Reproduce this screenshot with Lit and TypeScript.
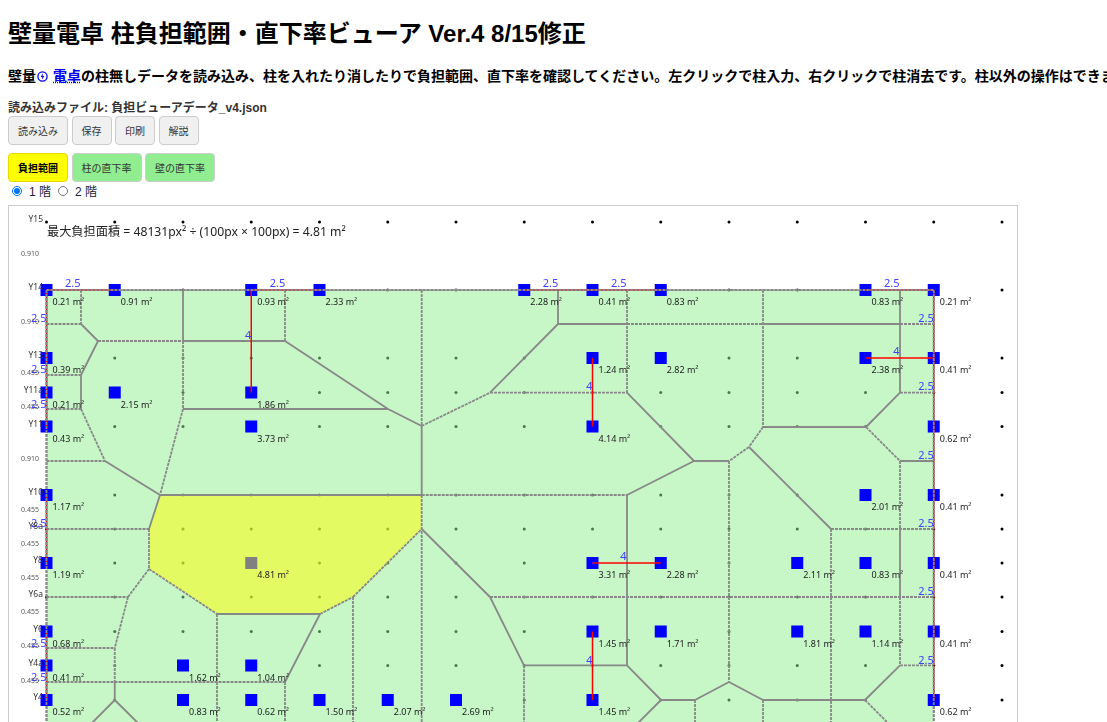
import { LitElement, html, css, svg } from 'lit'
import { customElement, state } from 'lit/decorators.js'

const COLS = [46.5, 114.75, 183, 251.25, 319.5, 387.75, 456, 524.25, 592.5, 660.75, 729, 797.25, 865.5, 933.75, 1002]
const ROWS = [222, 290, 358, 392.5, 426.5, 495, 529, 563, 597, 631.5, 665.5, 700]
const [L, R] = [46.5, 933.75]
const BOTTOM = 730

// [x1, y1, x2, y2]
const SOLID = [
  [81, 324, 98, 341], [183, 341, 285, 341], [183, 290, 183, 341], [98, 341, 81, 375], [81, 375, 81, 409],
  [105, 461, 160, 495], [183, 409, 388, 409], [285, 341, 388, 409], [388, 409, 421.7, 426], [421.7, 426, 421.7, 495],
  [490, 392.7, 558, 324], [558, 290, 558, 324], [558, 324, 627, 324], [763, 324, 900, 324], [627, 392.7, 694, 461],
  [694, 461, 729, 461], [694, 461, 627, 495], [627, 495, 627, 665.3], [160, 495, 421.7, 495], [763, 427, 866, 427],
  [900, 290, 900, 392.7], [900, 392.7, 866, 427], [900, 461, 933.75, 461], [900, 529, 900, 597], [900, 665.3, 865, 700],
  [763, 700, 865, 700], [763, 700, 729, 682], [749, 447, 831, 529], [490, 597, 524, 665.3], [421.7, 529, 490, 597],
  [524, 665.3, 627, 665.3], [627, 665.3, 661, 700], [661, 700, 695, 700], [695, 700, 729, 682], [661, 700, 631, 730],
  [149, 529, 160, 495], [114.75, 682, 114.75, 700], [217, 614, 320, 614], [320, 614, 285, 682],
  [114.75, 700, 85, 730], [114.75, 700, 145, 730],
]
const DASHED = [
  [L, 290, R, 290], [L, 290, L, BOTTOM], [R, 290, R, BOTTOM], [81, 290, 81, 324], [L, 324, 81, 324], [98, 341, 183, 341],
  [285, 290, 285, 341], [183, 341, 183, 409], [L, 375, 81, 375], [L, 409, 81, 409], [81, 409, 105, 461], [L, 461, 105, 461],
  [183, 409, 160, 495], [421.7, 290, 421.7, 426], [421.7, 495, 421.7, BOTTOM], [421.7, 426, 490, 392.7], [627, 324, 763, 324],
  [900, 324, R, 324], [627, 290, 627, 392.7], [490, 392.7, 627, 392.7], [729, 461, 729, 682], [421.7, 495, 627, 495],
  [763, 290, 763, 427], [900, 392.7, R, 392.7], [866, 427, 900, 461], [900, 461, 900, 529], [900, 597, 900, 665.3],
  [900, 665.3, R, 665.3], [865, 700, 895, 730], [763, 700, 763, BOTTOM], [763, 427, 749, 447], [749, 447, 729, 461],
  [831, 529, R, 529], [831, 529, 831, BOTTOM], [490, 597, R, 597], [524, 665.3, 524, BOTTOM], [695, 700, 695, BOTTOM],
  [L, 529, 149, 529], [149, 529, 149, 569], [149, 569, 128, 597], [L, 597, 128, 597], [128, 597, 114.75, 648],
  [L, 648, 114.75, 648], [114.75, 648, 114.75, 682], [L, 682, 285, 682], [149, 569, 217, 614], [217, 614, 217, BOTTOM],
  [285, 682, 285, BOTTOM], [320, 614, 353, 597], [353, 597, 421.7, 529], [353, 597, 353, BOTTOM],
]

// row y, then [column index, area]
const PILLARS: [number, [number, string][]][] = [
  [290, [[0, '0.21'], [1, '0.91'], [3, '0.93'], [4, '2.33'], [7, '2.28'], [8, '0.41'], [9, '0.83'], [12, '0.83'], [13, '0.21']]],
  [358, [[0, '0.39'], [8, '1.24'], [9, '2.82'], [12, '2.38'], [13, '0.41']]],
  [392.5, [[0, '0.21'], [1, '2.15'], [3, '1.86']]],
  [426.5, [[0, '0.43'], [3, '3.73'], [8, '4.14'], [13, '0.62']]],
  [495, [[0, '1.17'], [12, '2.01'], [13, '0.41']]],
  [563, [[0, '1.19'], [3, '4.81'], [8, '3.31'], [9, '2.28'], [11, '2.11'], [12, '0.83'], [13, '0.41']]],
  [631.5, [[0, '0.68'], [8, '1.45'], [9, '1.71'], [11, '1.81'], [12, '1.14'], [13, '0.41']]],
  [665.5, [[0, '0.41'], [2, '1.62'], [3, '1.04']]],
  [700, [[0, '0.52'], [2, '0.83'], [3, '0.62'], [4, '1.50'], [5, '2.07'], [6, '2.69'], [8, '1.45'], [13, '0.62']]],
]

// beams: [x1, y1, x2, y2, span]
const BEAMS: [number, number, number, number, string][] = [
  [L, 290, 114.75, 290, '2.5'], [251.25, 290, 319.5, 290, '2.5'], [524.25, 290, 592.5, 290, '2.5'],
  [592.5, 290, 660.75, 290, '2.5'], [865.5, 290, R, 290, '2.5'],
  [L, 290, L, 358, '2.5'], [L, 358, L, 392.5, '2.5'], [L, 392.5, L, 426.5, '2.5'], [L, 495, L, 563, '2.5'],
  [L, 631.5, L, 665.5, '2.5'], [L, 665.5, L, 700, '2.5'],
  [R, 290, R, 358, '2.5'], [R, 358, R, 426.5, '2.5'], [R, 426.5, R, 495, '2.5'], [R, 495, R, 563, '2.5'],
  [R, 563, R, 631.5, '2.5'], [R, 631.5, R, 700, '2.5'],
  [251.25, 290, 251.25, 392.5, '4'], [592.5, 358, 592.5, 426.5, '4'], [865.5, 358, R, 358, '4'],
  [592.5, 563, 660.75, 563, '4'], [592.5, 631.5, 592.5, 700, '4'],
]

const ROW_LABELS: [string, number][] = [
  ['Y15', 222], ['Y14', 290], ['Y13', 358], ['Y11a', 392.5], ['Y11', 426.5], ['Y10', 495], ['Y8a', 529],
  ['Y8', 563], ['Y6a', 597], ['Y6', 631.5], ['Y4a', 665.5], ['Y4', 700],
]
const GAP_LABELS: [string, number][] = [
  ['0.910', 256], ['0.910', 324], ['0.455', 375], ['0.455', 409], ['0.910', 461], ['0.455', 512], ['0.455', 546],
  ['0.455', 580], ['0.455', 614], ['0.455', 648], ['0.455', 683],
]
const YELLOW = '160,495 421.7,495 421.7,529 353,597 320,614 217,614 149,569 149,529'

@customElement('app-root')
export class AppRoot extends LitElement {
  static styles = css`
    :host {
      display: block;
      padding: 0 8px;
      font-family: 'Liberation Sans', 'Noto Sans CJK JP', sans-serif;
      color: #000;
    }
    h1 {
      margin: 0;
      padding-top: 18px;
      font-size: 24px;
      line-height: 32px;
      white-space: nowrap;
    }
    .intro {
      margin: 17px 0 0;
      font-size: 14px;
      line-height: 18px;
      font-weight: bold;
      white-space: nowrap;
    }
    .intro svg {
      width: 11px;
      height: 11px;
      vertical-align: -1px;
      margin: 0 5px 0 1px;
    }
    .intro a {
      color: #00e;
      text-decoration: underline dotted;
    }
    .file {
      margin-top: 16px;
      font-size: 12px;
      line-height: 15px;
      font-weight: bold;
      color: #333;
    }
    .row {
      display: flex;
      gap: 3.5px;
    }
    .row + .row {
      margin-top: 8px;
    }
    button {
      box-sizing: border-box;
      height: 29px;
      padding: 0 9px;
      border: 1px solid #ccc;
      border-radius: 4px;
      background: #f0f0f0;
      color: #333;
      font: 10px 'Liberation Sans', 'Noto Sans CJK JP', sans-serif;
    }
    button.on {
      background: #ff0;
      border-color: #e6d800;
      color: #000;
      font-weight: bold;
    }
    button.off {
      background: #90ee90;
    }
    .floors {
      display: flex;
      align-items: center;
      height: 17px;
      padding-left: 4px;
      font-size: 12px;
      color: #223;
    }
    .floors input {
      width: 10px;
      height: 10px;
      margin: 0 7px 0 0;
    }
    .floors label {
      display: flex;
      align-items: center;
      margin-right: 7px;
    }
    .sheet {
      width: 1008px;
      height: 520px;
      margin-top: 6px;
      border: 1px solid #ccc;
      overflow: hidden;
    }
    .sheet svg {
      display: block;
      font-family: 'Noto Sans', 'Noto Sans CJK JP', sans-serif;
      filter: blur(0.3px);
    }
    .wall {
      stroke: #888;
      stroke-width: 1.8;
      fill: none;
    }
    .wall.dash {
      stroke-dasharray: 3 1;
    }
    .beam {
      stroke: #f00;
      stroke-width: 1.5;
    }
    .area {
      font-size: 9px;
      fill: #222;
    }
    .span {
      font-size: 11px;
      fill: #4040ff;
      text-anchor: end;
    }
    .axis {
      font-size: 8.5px;
      fill: #333;
      text-anchor: end;
    }
    .gap {
      font-size: 7px;
      fill: #555;
      text-anchor: end;
    }
    .headline {
      font-size: 12.2px;
      fill: #222;
    }
  `

  @state()
  floor = 1

  line(seg: number[], cls: string) {
    return svg`<line class=${cls} x1=${seg[0]} y1=${seg[1]} x2=${seg[2]} y2=${seg[3]} />`
  }

  drawing() {
    return svg`
      ${ROWS.flatMap((y) => COLS.map((x) => svg`<circle cx=${x} cy=${y} r="1.5" fill="#000" />`))}
      <rect x=${L} y="290" width=${R - L} height=${BOTTOM - 290} fill="#90ee90" fill-opacity="0.5" />
      <polygon points=${YELLOW} fill="#ff0" fill-opacity="0.5" />
      ${SOLID.map((s) => this.line(s, 'wall'))}
      ${DASHED.map((s) => this.line(s, 'wall dash'))}
      ${PILLARS.flatMap(([y, items]) =>
        items.map(([col, area]) => {
          const x = COLS[col]
          return svg`
            <rect x=${x - 6} y=${y - 6} width="12" height="12" fill=${area === '4.81' ? '#808080' : '#00f'} />
          `
        })
      )}
      ${BEAMS.map((b) => this.line(b as unknown as number[], 'beam'))}
      ${DASHED.slice(0, 3).map((s) => this.line(s, 'wall dash'))}
      ${PILLARS.flatMap(([y, items]) =>
        items.map(([col, area]) => svg`<text class="area" x=${COLS[col] + 6} y=${y + 15}>${area} m²</text>`)
      )}
      ${BEAMS.map((b) => {
        const vertical = b[0] === b[2]
        const x = (b[0] + b[2]) / 2
        const y = (b[1] + b[3]) / 2
        return svg`<text class="span" x=${x} y=${vertical ? y - 2 : y - 3}>${b[4]}</text>`
      })}
      ${ROW_LABELS.map(([t, y]) => svg`<text class="axis" x="43" y=${y}>${t}</text>`)}
      ${GAP_LABELS.map(([t, y]) => svg`<text class="gap" x="39" y=${y}>${t}</text>`)}
      <text class="headline" x="47" y="235.5">最大負担面積 = 48131px² ÷ (100px × 100px) = 4.81 m²</text>
    `
  }

  render() {
    return html`
      <h1>壁量電卓 柱負担範囲・直下率ビューア Ver.4 8/15修正</h1>
      <p class="intro">
        壁量<svg viewBox="0 0 12 12"><circle cx="6" cy="6" r="5" fill="none" stroke="#00e" stroke-width="1.4" /><path d="M6.6 2.4 4 6.6h1.8L5.4 9.6 8 5.4H6.2z" fill="#00e" /></svg><a href="#">電卓</a>の柱無しデータを読み込み、柱を入れたり消したりで負担範囲、直下率を確認してください。左クリックで柱入力、右クリックで柱消去です。柱以外の操作はできません。
      </p>
      <div class="file">読み込みファイル: 負担ビューアデータ_v4.json</div>
      <div class="row">
        <button>読み込み</button><button>保存</button><button>印刷</button><button>解説</button>
      </div>
      <div class="row">
        <button class="on">負担範囲</button><button class="off">柱の直下率</button><button class="off">壁の直下率</button>
      </div>
      <div class="floors">
        <label><input type="radio" name="floor" .checked=${this.floor === 1} />1 階</label>
        <label><input type="radio" name="floor" .checked=${this.floor === 2} />2 階</label>
      </div>
      <div class="sheet">
        <svg width="1008" height="520" viewBox="9 206 1008 520">${this.drawing()}</svg>
      </div>
    `
  }
}
